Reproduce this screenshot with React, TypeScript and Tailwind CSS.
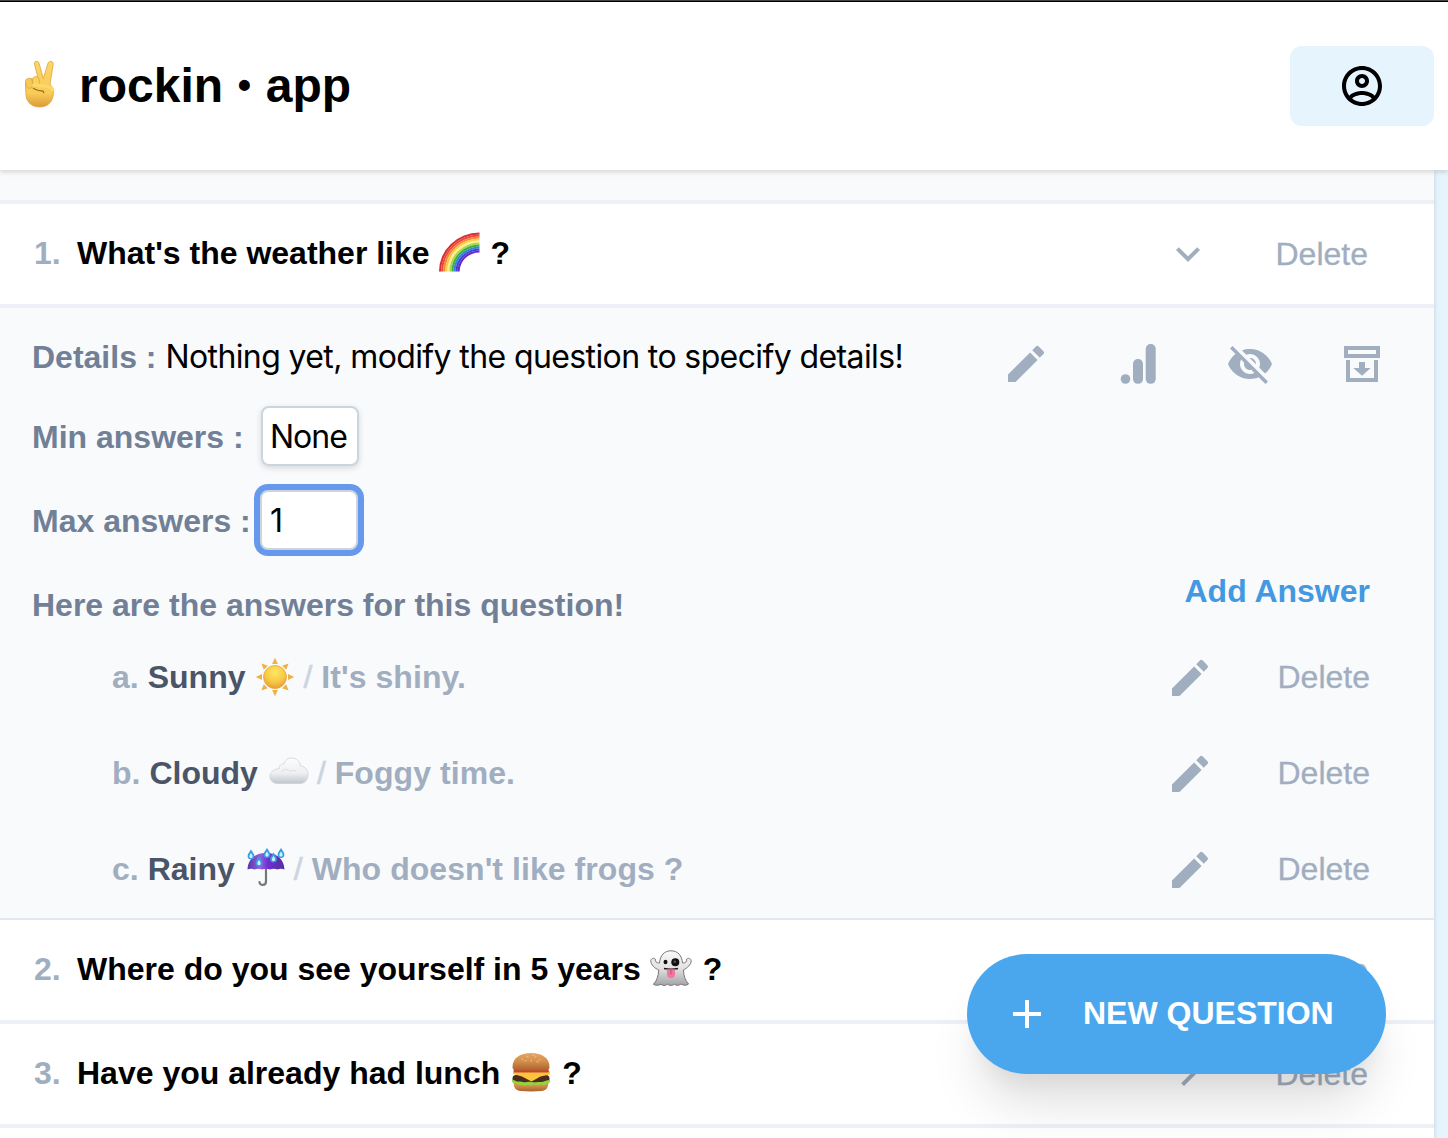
import React from "react";
import { MdEdit, MdVisibilityOff, MdExpandMore, MdChevronRight, MdAdd } from "react-icons/md";

const AccountIcon = () => (
  <svg viewBox="0 0 24 24" className="size-12" fill="currentColor">
    <path d="M12 2C6.48 2 2 6.48 2 12s4.48 10 10 10 10-4.48 10-10S17.52 2 12 2zM7.07 18.28c.43-.9 3.05-1.78 4.93-1.78s4.51.88 4.93 1.78C15.57 19.36 13.86 20 12 20s-3.57-.64-4.93-1.72zm11.29-1.45c-1.43-1.74-4.9-2.33-6.36-2.33s-4.93.59-6.36 2.33C4.62 15.49 4 13.82 4 12c0-4.41 3.59-8 8-8s8 3.59 8 8c0 1.82-.62 3.49-1.64 4.83zM12 6c-1.94 0-3.5 1.56-3.5 3.5S10.06 13 12 13s3.5-1.56 3.5-3.5S13.94 6 12 6zm0 5c-.83 0-1.5-.67-1.5-1.5S11.17 8 12 8s1.5.67 1.5 1.5S12.83 11 12 11z" />
  </svg>
);

const AnalyticsIcon = () => (
  <svg viewBox="0 0 48 48" className="size-12" fill="currentColor">
    <circle cx="11.5" cy="39" r="4.8" />
    <rect x="19" y="19" width="10" height="24.8" rx="4.8" />
    <rect x="31.7" y="4" width="10" height="39.8" rx="4.8" />
  </svg>
);

const ArchiveIcon = () => (
  <svg viewBox="0 0 48 48" className="size-12" fill="currentColor">
    <path fillRule="evenodd" d="M6 6h36v12H6zM10 10v4h28v-4z" />
    <path d="M8 20h4v18h24V20h4v22H8z" />
    <path d="M21 22h6v6h5.7L24 35.8 15.3 28H21z" />
  </svg>
);

const PeaceEmoji = () => (
  <svg viewBox="0 0 32 48" className="h-12 w-8 shrink-0">
    <defs>
      <linearGradient id="hand" x1="0" y1="0" x2="0" y2="1">
        <stop offset="0" stopColor="#fbd766" />
        <stop offset="0.7" stopColor="#f8cb58" />
        <stop offset="1" stopColor="#dd9a35" />
      </linearGradient>
    </defs>
    <g stroke="#dca244" strokeWidth="0.8" strokeLinejoin="round">
      <path d="M10.5 4C9.700 1 14 .2 15 3l4.300 15.500L24 3.200C25 .2 29.800 1 29.200 4.500L26 24c2.500 3 4 6 3.300 10.500C28.500 42.500 23 47 16 47 8 47 2.800 42.500 2 35.500L1.500 24c1-5 6-6 9-5l4 1z" fill="url(#hand)" />
      <path d="M1.500 21.500c0-4 6.300-4.500 6.700-.5l.3 4.500c-.8 4-6 3.300-6.600 0z" fill="#f6c952" />
      <path d="M8.500 19.500c.5-4 6-4 6.500 0l.5 5c-.5 3.500-6 3.200-6.700 0z" fill="#fad35f" />
    </g>
    <path d="M8.500 26c3-2 7 0 11 0 5 0 9 1.500 9.500 5" fill="none" stroke="#fbd969" strokeWidth="3.500" />
    <path d="M9 27.800c2 2 5 2.700 8.500 3 2 .2 2.500 1 2 2.400" fill="none" stroke="#a06620" strokeWidth="1.200" />
  </svg>
);

const RainbowEmoji = () => {
  const bands = ["#d42f31", "#f04742", "#f58a35", "#fbc94a", "#fbf08a", "#a6d94c", "#3fae3c", "#3383dd", "#3c45d8", "#6a24cf"];
  return (
    <svg viewBox="0 0 42 40" className="h-10 w-[42px] shrink-0">
      {bands.map((c, i) => {
        const rx = 40.500 - i * 2.060;
        const ry = 39 - i * 2;
        return <path key={c} d={`M${41.500 - rx} 39.500A${rx} ${ry} 0 0 1 41.500 ${39.500 - ry}V${41.500 - ry}A${rx - 2.100} ${ry - 2} 0 0 0 ${43.600 - rx} 39.500z`} fill={c} />;
      })}
    </svg>
  );
};

const GhostEmoji = () => (
  <svg viewBox="0 0 42 36" className="h-9 w-[42px] shrink-0">
    <defs>
      <linearGradient id="ghost" x1="0" y1="0" x2="0" y2="1">
        <stop offset="0" stopColor="#fafafa" />
        <stop offset="0.500" stopColor="#e2e2e3" />
        <stop offset="1" stopColor="#a3a3a6" />
      </linearGradient>
    </defs>
    <path d="M21 .8c7 0 11 5 11.500 12.200 3 .2 4.500-1.300 4.200-4 1-1.500 4.300-.5 4.500 1.500.2 4-4 7.500-7.800 9.500.4 6.500 2 10.500 5.200 14-2 1.800-5.600 1.500-7.600 0-2 1.500-4.500 2-6.500.3-2.500 1.500-5 1.500-7 0-2.500 1.700-4.500 1.500-6.500 0-2 1-5.500 1.500-7.600 0 3.300-3.500 5-8 5.400-14.300C5 18.500.8 15 .8 10.500c.2-2 3.500-3 4.500-1.500-.3 2.700 1.200 4.200 4.200 4C10 5.800 14 .8 21 .8z" fill="url(#ghost)" stroke="#77777b" strokeWidth="1" />
    <ellipse cx="15.500" cy="12" rx="2" ry="2.200" fill="#111" />
    <circle cx="25.300" cy="12.200" r="4" fill="#111" />
    <circle cx="24.800" cy="11.800" r="1.300" fill="#555" />
    <path d="M14 18.500c4.500 1 9.500 1 14 0" stroke="#2a1515" strokeWidth="1.500" fill="none" />
    <path d="M17 19.300h8v5.200c0 5-8 5-8 0z" fill="#f2779f" />
    <path d="M21 19.500v5" stroke="#c84b78" strokeWidth="1" />
  </svg>
);

const BurgerEmoji = () => (
  <svg viewBox="0 0 40 40" className="size-10 shrink-0">
    <defs>
      <linearGradient id="bun" x1="0" y1="0" x2="0" y2="1">
        <stop offset="0" stopColor="#e3a768" />
        <stop offset="0.500" stopColor="#d38c4a" />
        <stop offset="1" stopColor="#a9622b" />
      </linearGradient>
    </defs>
    <path d="M2.500 30c1-2 34-2 35 0 0 5-2 8.500-7 9-7 .6-14 .6-21 0-5-.5-7-4-7-9z" fill="url(#bun)" />
    <rect x="1.500" y="23" width="37" height="7.500" rx="3.500" fill="#4b2b1b" />
    <path d="M1 28c3-.5 4 2 7 1.500s4 1 6 1 3-1 6-.5 4 .8 6 .3 4-.3 6-.6 4-2 7-1.700c.7 2-1 4-3.500 3.500-1.500 2.500-4.500 1.500-5.500.5-2 2-5 1.800-6.500.5-2.500 1.500-5 1-6.500 0-2 1.500-5 1.200-6.500 0-2 1-4 .2-5-1-2.500.5-5-1-4.500-3.500z" fill="#91d43e" />
    <path d="M2 19.500h37v3l-9.500 2-9 5-9.500-5-9-2.500z" fill="#fcc43d" />
    <rect x="2.500" y="17.500" width="35.500" height="3" rx="1.500" fill="#cf3f34" />
    <path d="M1.500 15C1.500 6 9 1 20 1s18.500 5 18.500 14c0 3-2.500 3.500-5 3.500h-27c-2.500 0-5-.5-5-3.500z" fill="url(#bun)" />
    <path d="M11 7l1 .8M16 4.500l1 .5M20 8l.3 1M25 4.500l-1 .8M29 7.500l-1 1M22 3l.8.300M15 8.500l-.8.800M26 9.500l.5.800" stroke="#f3d49c" strokeWidth="0.900" strokeLinecap="round" />
  </svg>
);

const SunEmoji = () => (
  <svg viewBox="0 0 40 40" className="size-10 shrink-0">
    <defs>
      <radialGradient id="sun" cx="0.500" cy="0.300" r="0.700">
        <stop offset="0" stopColor="#fde765" />
        <stop offset="0.600" stopColor="#f8c844" />
        <stop offset="1" stopColor="#e79d35" />
      </radialGradient>
    </defs>
    {[0, 45, 90, 135, 180, 225, 270, 315].map((a) => (
      <path key={a} d="M20 .8l2.900 6.200h-5.800z" fill="#eeb142" transform={`rotate(${a} 20 20)`} />
    ))}
    <circle cx="20" cy="20" r="11.500" fill="url(#sun)" stroke="#e3a03c" strokeWidth="0.700" />
  </svg>
);

const CloudEmoji = () => (
  <svg viewBox="0 0 40 28" className="h-7 w-10 shrink-0">
    <defs>
      <linearGradient id="cloud" x1="0" y1="0" x2="0" y2="1">
        <stop offset="0" stopColor="#fdfdfe" />
        <stop offset="0.600" stopColor="#edeff2" />
        <stop offset="1" stopColor="#c0c6cd" />
      </linearGradient>
    </defs>
    <path d="M8.500 26.500C4 26.500 1 23.500 1 19.500c0-4 2.500-7 9-8 0-3 2.500-5 5-4.500C16 3 19 1 22.500 1c5 0 8.500 3.500 9 8 5 .5 7.800 4.500 7.500 9-.3 5-3.500 8.500-8 8.500z" fill="url(#cloud)" stroke="#cdd2d8" strokeWidth="0.800" />
    <path d="M12 15c2-3 7-3.500 9.500-.5 2-1.500 4.500-1.500 6 0" fill="none" stroke="#d6dae0" strokeWidth="0.900" />
  </svg>
);

const UmbrellaEmoji = () => (
  <svg viewBox="0 0 40 40" className="size-10 shrink-0">
    <defs>
      <linearGradient id="umbrella" x1="0" y1="0" x2="1" y2="0">
        <stop offset="0" stopColor="#5a35a8" />
        <stop offset="0.350" stopColor="#9461e0" />
        <stop offset="0.550" stopColor="#6f2fd0" />
        <stop offset="1" stopColor="#54309e" />
      </linearGradient>
    </defs>
    <path d="M20 21v13.500c0 4.500-6.500 4.500-6.500.500" fill="none" stroke="#77777a" strokeWidth="2.200" strokeLinecap="round" />
    <path d="M1.500 22.500C2 12 9 6 20 6s18 6 18.500 16.500c-2-1-5-1-7 0-2.500-1-5-1-7.500 0-2.500-1-5.500-1-8 0-2.500-1-5-1-7.500 0-2-1-5-1-7 0z" fill="url(#umbrella)" />
    {[[5, 2], [21, 0.500], [13, 9], [27.500, 5], [35, 0.500]].map(([x, y]) => (
      <g key={x} transform={`translate(${x} ${y})`}>
        <path d="M0 .5C1.500 3 3.400 5 3.400 7.200c0 4.400-6.800 4.400-6.800 0C-3.400 5-1.500 3 0 .5z" fill="#3b9be4" />
        <path d="M0 4c1 1.300 1.600 2.500 1.600 3.500 0 2-3.200 2-3.200 0C-1.600 6.500-1 5.300 0 4z" fill="#cdf1fc" />
      </g>
    ))}
  </svg>
);

type QuestionProps = {
  number: number;
  title: string;
  emoji: React.ReactNode;
  gap: string;
  open?: boolean;
};

const Question = ({ number, title, emoji, gap, open }: QuestionProps) => (
  <div className="flex h-[100px] shrink-0 items-center justify-between bg-white pr-[66px] pl-[34px] text-[32px]">
    <div className="flex items-center pb-0.5 font-bold whitespace-pre">
      <span className="w-[43px] text-[#a0aec0]">{number}.</span>
      <span>{title}</span>
      <span className={gap}>{emoji}</span>
      <span>?</span>
    </div>
    <div className="flex items-center text-[#a0aec0]">
      {open ? <MdExpandMore className="size-12" /> : <MdChevronRight className="size-12" />}
      <span className="ml-16 [-webkit-text-stroke:0.3px_#a0aec0]">Delete</span>
    </div>
  </div>
);

type AnswerProps = { letter: string; label: string; emoji: React.ReactNode; gap: string; details: string };

const Answer = ({ letter, label, emoji, gap, details }: AnswerProps) => (
  <div className="flex h-24 items-center justify-between pr-16 pl-28 text-[32px]">
    <div className="flex items-center text-[#a0aec0]">
      <span>{letter}.</span>
      <span className="ml-[9px] text-[#4a5568]">{label}</span>
      <span className={gap}>{emoji}</span>
      <span className="ml-2 font-normal text-[#cbd5e0] [-webkit-text-stroke:0.6px_#cbd5e0]">/</span>
      <span className="ml-[9px] tracking-[0.06px]">{details}</span>
    </div>
    <div className="flex items-center font-normal text-[#a0aec0]">
      <MdEdit className="mt-0.5 size-12" />
      <span className="ml-16 [-webkit-text-stroke:0.3px_#a0aec0]">Delete</span>
    </div>
  </div>
);

export default function App() {
  return (
    <div className="relative flex h-[1138px] w-[1448px] flex-col overflow-hidden bg-[#e6f4fe] font-['Liberation_Sans',Arial,sans-serif] text-black">
      <header className="z-10 flex h-[170px] shrink-0 flex-col bg-white shadow-[0_2px_6px_rgba(0,0,0,0.1),0_2px_4px_rgba(0,0,0,0.06)]">
        <div className="h-0.5 border-b border-black bg-[#444]" />
        <div className="flex flex-1 items-center justify-between pr-3.5 pl-6">
          <div className="flex items-center text-[48px] font-bold">
            <span className="pb-1"><PeaceEmoji /></span>
            <h1 className="ml-[23px] flex items-center whitespace-pre">
              rockin <span className="w-4 pb-0.5 text-center text-[38px] leading-none">•</span> app
            </h1>
          </div>
          <button className="flex h-20 w-36 items-center justify-center rounded-xl bg-[#e6f4fe]">
            <AccountIcon />
          </button>
        </div>
      </header>

      <main className="flex w-[1434px] flex-1 flex-col bg-[#f9fafc] pt-[30px] shadow-[0_2px_6px_rgba(0,0,0,0.1),0_2px_4px_rgba(0,0,0,0.06)]">
        <div className="h-1 shrink-0 bg-[#edf0f6]" />
        <Question number={1} title="What's the weather like" emoji={<RainbowEmoji />} gap="mr-[11px] ml-2 pb-0.5" open />
        <div className="h-1 shrink-0 bg-[#edf0f6]" />

        <section className="flex h-[612px] shrink-0 flex-col border-b-2 border-[#e2e8f0] pt-[25px] text-[32px] font-bold text-[#718096]">
          <div className="flex h-12 items-center justify-between pr-12 pl-8">
            <div className="flex items-baseline">
              <span>Details :</span>
              <span className="ml-[9px] font-['Inter',sans-serif] font-normal tracking-[-0.61px] text-black">
                Nothing yet, modify the question to specify details!
              </span>
            </div>
            <div className="flex gap-16 pt-3.5 text-[#a0aec0]">
              <MdEdit className="size-12" />
              <AnalyticsIcon />
              <MdVisibilityOff className="size-12" />
              <ArchiveIcon />
            </div>
          </div>

          <label className="mt-[25px] flex h-[60px] items-center pl-8">
            <span className="w-[229px] pt-0.5">Min answers :</span>
            <span className="flex h-[60px] w-[98px] items-center rounded-lg border-2 border-[#cbd5e0] bg-white pt-0.5 pl-[7px] font-['Inter',sans-serif] font-normal tracking-[-1px] text-black shadow-[0_2px_6px_rgba(0,0,0,0.14)]">
              None
            </span>
          </label>

          <label className="mt-6 flex h-[60px] items-center pl-8">
            <span className="w-[228px] pt-0.5">Max answers :</span>
            <span className="flex h-[60px] w-[98px] items-center rounded-lg border-2 border-[#cbd5e0] bg-white pt-0.5 pl-2 font-['Inter',sans-serif] font-normal text-black shadow-[0_0_0_6px_#6699ec]">
              1
            </span>
          </label>

          <div className="mt-[31px] flex h-12 items-center justify-between pr-16 pl-8">
            <span>Here are the answers for this question!</span>
            <button className="pb-7 text-[#4299e1]">Add Answer</button>
          </div>

          <Answer letter="a" label="Sunny" emoji={<SunEmoji />} gap="ml-[10px]" details="It's shiny." />
          <Answer letter="b" label="Cloudy" emoji={<CloudEmoji />} gap="ml-[11px] pb-1" details="Foggy time." />
          <Answer letter="c" label="Rainy" emoji={<UmbrellaEmoji />} gap="ml-[11px] pb-1" details="Who doesn't like frogs ?" />
        </section>

        <Question number={2} title="Where do you see yourself in 5 years" emoji={<GhostEmoji />} gap="mr-[11px] ml-[9px] pb-0.5" />
        <div className="h-1 shrink-0 bg-[#edf0f6]" />
        <Question number={3} title="Have you already had lunch" emoji={<BurgerEmoji />} gap="mr-[11px] ml-[11px] pb-0.5" />
        <div className="h-1 shrink-0 bg-[#edf0f6]" />
        <div className="flex-1 bg-white" />
      </main>

      <button className="absolute right-[62px] bottom-16 z-20 flex h-[120px] w-[419px] items-center rounded-full bg-[#4aa7ee] pl-9 text-[32px] font-bold text-white shadow-[0_40px_50px_-10px_rgba(0,0,0,0.12),0_20px_20px_-10px_rgba(0,0,0,0.05)]">
        <MdAdd className="size-12" />
        <span className="ml-8 pb-[3px] whitespace-nowrap">NEW QUESTION</span>
      </button>
    </div>
  );
}
